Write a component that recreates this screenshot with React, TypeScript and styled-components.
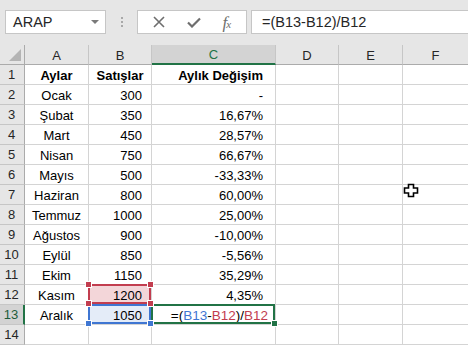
import { Fragment } from "react";
import styled, { createGlobalStyle, css } from "styled-components";

const GlobalStyle = createGlobalStyle`
   html, body {
      margin: 0;
      padding: 0;
      background: #ffffff;
      overflow: hidden;
   }
   * {
      box-sizing: border-box;
   }
`;

const GREEN = "#217346";
const RED = "#c23d4f";
const BLUE = "#3f76d2";

const Page = styled.div`
   position: relative;
   width: 468px;
   height: 345px;
   overflow: hidden;
   font-family: "Liberation Sans", Arial, sans-serif;
   background: #ffffff;
`;

const Toolbar = styled.div`
   height: 45px;
   background: #e6e6e6;
   display: flex;
   align-items: flex-start;
   padding: 10px 0 0 5px;
`;

const NameBox = styled.div`
   width: 101px;
   height: 24px;
   background: #ffffff;
   border: 1px solid #c6c6c6;
   display: flex;
   align-items: center;
   justify-content: space-between;
   padding: 0 6px 0 7px;
   font-size: 14.5px;
   color: #262626;
`;

const DropArrow = styled.span`
   width: 0;
   height: 0;
   border-left: 4px solid transparent;
   border-right: 4px solid transparent;
   border-top: 4px solid #7a7a7a;
`;

const Grip = styled.div`
   width: 31px;
   height: 24px;
   display: flex;
   flex-direction: column;
   align-items: center;
   justify-content: center;
   gap: 2px;
   span {
      width: 2px;
      height: 2px;
      background: #a8a8a8;
   }
`;

const FxButtons = styled.div`
   width: 110px;
   height: 24px;
   background: #ffffff;
   border: 1px solid #c6c6c6;
   display: flex;
   align-items: center;
   justify-content: space-around;
   padding: 0 4px 0 4px;
   color: #6e6e6e;
`;

const FxLabel = styled.span`
   font-family: "Liberation Serif", serif;
   font-style: italic;
   font-size: 17px;
   line-height: 1;
   color: #6e6e6e;
   sub {
      font-size: 11px;
      vertical-align: baseline;
      margin-left: -1px;
   }
`;

const FormulaInput = styled.div`
   flex: 1;
   margin-left: 4px;
   height: 24px;
   background: #ffffff;
   border: 1px solid #c6c6c6;
   border-right: none;
   display: flex;
   align-items: center;
   padding-left: 10px;
   font-size: 14.5px;
   color: #262626;
`;

const Grid = styled.div`
   display: grid;
   grid-template-columns: 25px 64px 63px 124px 63px 64px 66px;
   grid-auto-rows: 20px;
   font-size: 13px;
`;

const HeaderCell = styled.div<{ $selected?: boolean }>`
   position: relative;
   background: ${({ $selected }) => ($selected ? "#d3d3d3" : "#e6e6e6")};
   border-right: 1px solid #c6c6c6;
   border-bottom: ${({ $selected }) => ($selected ? `2px solid ${GREEN}` : "1px solid #ababab")};
   color: ${({ $selected }) => ($selected ? GREEN : "#262626")};
   display: flex;
   align-items: center;
   justify-content: center;
   padding-top: 1px;
`;

const Corner = styled.div`
   position: relative;
   background: #e6e6e6;
   border-right: 1px solid #ababab;
   border-bottom: 1px solid #ababab;
   &::after {
      content: "";
      position: absolute;
      right: 3px;
      bottom: 3px;
      width: 0;
      height: 0;
      border-left: 12px solid transparent;
      border-bottom: 12px solid #b4b4b4;
   }
`;

const RowHeader = styled.div<{ $selected?: boolean }>`
   background: ${({ $selected }) => ($selected ? "#d3d3d3" : "#e6e6e6")};
   border-bottom: 1px solid #c6c6c6;
   border-right: ${({ $selected }) => ($selected ? `2px solid ${GREEN}` : "1px solid #ababab")};
   color: ${({ $selected }) => ($selected ? "#1e5c3a" : "#262626")};
   display: flex;
   align-items: center;
   justify-content: center;
   padding-right: 1px;
`;

type Mark = "red" | "blue" | "green";

const markColor = (m: Mark) => (m === "red" ? RED : m === "blue" ? BLUE : GREEN);

const Cell = styled.div<{ $align?: "left" | "center" | "right"; $bold?: boolean; $pad?: number; $mark?: Mark }>`
   position: relative;
   border-right: 1px solid #d4d4d4;
   border-bottom: 1px solid #d4d4d4;
   display: flex;
   align-items: center;
   justify-content: ${({ $align }) =>
      $align === "right" ? "flex-end" : $align === "center" ? "center" : "flex-start"};
   padding: 1px ${({ $pad }) => $pad ?? 3}px 0 3px;
   font-weight: ${({ $bold }) => ($bold ? 700 : 400)};
   color: #000000;
   white-space: nowrap;
   background: ${({ $mark }) =>
      $mark === "red" ? "#f3d6d9" : $mark === "blue" ? "#e4ecf8" : "transparent"};
   ${({ $mark }) =>
      $mark &&
      css`
         &::before {
            content: "";
            position: absolute;
            left: -1px;
            top: -1px;
            right: 0;
            bottom: 0;
            border: 2px solid ${markColor($mark)};
            pointer-events: none;
         }
      `}
`;

const FormulaText = styled.span`
   font-size: 13.5px;
`;

const Handle = styled.span<{ $color: string; $x: "l" | "r"; $y: "t" | "b" }>`
   position: absolute;
   width: 5px;
   height: 5px;
   background: ${({ $color }) => $color};
   border: 1px solid #ffffff;
   box-sizing: content-box;
   ${({ $x }) => ($x === "l" ? "left: -4px;" : "right: -3px;")}
   ${({ $y }) => ($y === "t" ? "top: -4px;" : "bottom: -3px;")}
   z-index: 2;
`;

const Ref = styled.span<{ $color: string }>`
   color: ${({ $color }) => $color};
`;

const Cursor = styled.svg`
   position: absolute;
   left: 403px;
   top: 183px;
`;

type Row = [string, string, string];

const rows: Row[] = [
   ["Ocak", "300", "-"],
   ["Şubat", "350", "16,67%"],
   ["Mart", "450", "28,57%"],
   ["Nisan", "750", "66,67%"],
   ["Mayıs", "500", "-33,33%"],
   ["Haziran", "800", "60,00%"],
   ["Temmuz", "1000", "25,00%"],
   ["Ağustos", "900", "-10,00%"],
   ["Eylül", "850", "-5,56%"],
   ["Ekim", "1150", "35,29%"],
   ["Kasım", "1200", "4,35%"],
];

const columns = ["A", "B", "C", "D", "E", "F"];

function Formula() {
   return (
      <FormulaText>
         =(<Ref $color={BLUE}>B13</Ref>-<Ref $color={RED}>B12</Ref>)/<Ref $color={RED}>B12</Ref>
      </FormulaText>
   );
}

function EmptyCells() {
   return (
      <>
         <Cell />
         <Cell />
         <Cell />
      </>
   );
}

export default function App() {
   return (
      <Page>
         <GlobalStyle />
         <Toolbar>
            <NameBox>
               ARAP
               <DropArrow />
            </NameBox>
            <Grip>
               <span />
               <span />
               <span />
            </Grip>
            <FxButtons>
               <svg width="12" height="12" viewBox="0 0 12 12">
                  <path d="M1 1 L11 11 M11 1 L1 11" stroke="#6e6e6e" strokeWidth="1.6" />
               </svg>
               <svg width="14" height="11" viewBox="0 0 14 11">
                  <path d="M1 5.5 L5 9.5 L13 1.5" stroke="#6e6e6e" strokeWidth="2.2" fill="none" />
               </svg>
               <FxLabel>
                  f<sub>x</sub>
               </FxLabel>
            </FxButtons>
            <FormulaInput>=(B13-B12)/B12</FormulaInput>
         </Toolbar>
         <Grid>
            <Corner />
            {columns.map((c) => (
               <HeaderCell key={c} $selected={c === "C"}>
                  {c}
               </HeaderCell>
            ))}

            <RowHeader>1</RowHeader>
            <Cell $align="center" $bold>
               Aylar
            </Cell>
            <Cell $align="center" $bold>
               Satışlar
            </Cell>
            <Cell $align="right" $bold $pad={12}>
               Aylık Değişim
            </Cell>
            <EmptyCells />

            {rows.map(([month, sales, change], i) => {
               const n = i + 2;
               const isB12 = n === 12;
               return (
                  <Fragment key={n}>
                     <RowHeader>{n}</RowHeader>
                     <Cell $align="center">{month}</Cell>
                     <Cell $align="right" $pad={9} $mark={isB12 ? "red" : undefined}>
                        {sales}
                        {isB12 && (
                           <>
                              <Handle $color={RED} $x="l" $y="t" />
                              <Handle $color={RED} $x="r" $y="t" />
                              <Handle $color={RED} $x="l" $y="b" />
                              <Handle $color={RED} $x="r" $y="b" />
                           </>
                        )}
                     </Cell>
                     <Cell $align="right" $pad={12}>
                        {change}
                     </Cell>
                     <EmptyCells />
                  </Fragment>
               );
            })}

            <RowHeader $selected>13</RowHeader>
            <Cell $align="center">Aralık</Cell>
            <Cell $align="right" $pad={9} $mark="blue">
               1050
               <Handle $color={BLUE} $x="l" $y="b" />
               <Handle $color={BLUE} $x="r" $y="b" />
            </Cell>
            <Cell $align="right" $pad={7} $mark="green">
               <Formula />
               <Handle $color={GREEN} $x="r" $y="b" />
            </Cell>
            <EmptyCells />

            <RowHeader>14</RowHeader>
            <Cell />
            <Cell />
            <Cell />
            <EmptyCells />
         </Grid>
         <Cursor width="16" height="15" viewBox="0 0 16 15">
            <path
               d="M5.5 1.5 H10.5 V5 H14.5 V10 H10.5 V13.5 H5.5 V10 H1.5 V5 H5.5 Z"
               fill="#ffffff"
               stroke="#000000"
               strokeWidth="1.6"
            />
         </Cursor>
      </Page>
   );
}
